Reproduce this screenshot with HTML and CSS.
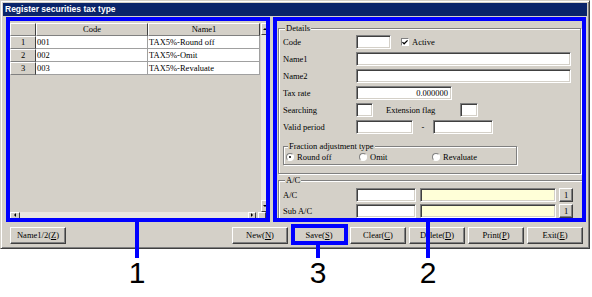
FILE: index.html
```html
<!DOCTYPE html>
<html>
<head>
<meta charset="utf-8">
<link rel="stylesheet" href="styles.css">
</head>
<body>
<div class="page">
  <div class="window">
    <div class="titlebar">Register securities tax type</div>
    <div class="panels">
      <div class="box left">
        <div class="grid">
          <div class="grid-main">
            <div class="table">
              <div class="row">
                <div class="hcell rh"></div>
                <div class="hcell c1">Code</div>
                <div class="hcell c2">Name1</div>
              </div>
              <div class="row">
                <div class="hcell rh">1</div>
                <div class="dcell c1">001</div>
                <div class="dcell c2">TAX5%-Round off</div>
              </div>
              <div class="row">
                <div class="hcell rh">2</div>
                <div class="dcell c1">002</div>
                <div class="dcell c2">TAX5%-Omit</div>
              </div>
              <div class="row">
                <div class="hcell rh">3</div>
                <div class="dcell c1">003</div>
                <div class="dcell c2">TAX5%-Revaluate</div>
              </div>
            </div>
            <div class="vscroll">
              <div class="sbtn"><span class="tri up"></span></div>
              <div class="sbtn"><span class="tri down"></span></div>
            </div>
          </div>
          <div class="hscroll">
            <div class="sbtn hl"><span class="tri left-t"></span></div>
            <div class="track"></div>
            <div class="sbtn hr"><span class="tri right-t"></span></div>
            <div class="gapsq"></div>
            <div class="sbtn corner"></div>
          </div>
        </div>
      </div>
      <div class="box right">
        <fieldset class="group details">
          <legend>Details</legend>
          <div class="frow first">
            <span class="lbl">Code</span>
            <span class="inp w-code"></span>
            <span class="chk"><svg width="7" height="7" viewBox="0 0 7 7"><path d="M0.5 3 L2.5 5 L6.5 1" fill="none" stroke="#000" stroke-width="1.4"/></svg></span>
            <span class="chk-lbl">Active</span>
          </div>
          <div class="frow">
            <span class="lbl">Name1</span>
            <span class="inp w-name"></span>
          </div>
          <div class="frow">
            <span class="lbl">Name2</span>
            <span class="inp w-name"></span>
          </div>
          <div class="frow">
            <span class="lbl">Tax rate</span>
            <span class="inp w-tax num-r">0.000000</span>
          </div>
          <div class="frow">
            <span class="lbl">Searching</span>
            <span class="inp w-s1"></span>
            <span class="lbl2">Extension flag</span>
            <span class="inp w-s2"></span>
          </div>
          <div class="frow">
            <span class="lbl">Valid period</span>
            <span class="inp w-v1"></span>
            <span class="dash">-</span>
            <span class="inp w-v2"></span>
          </div>
          <fieldset class="group frac">
            <legend>Fraction adjustment type</legend>
            <div class="radios">
              <span class="ritem"><span class="radio on"></span>Round off</span>
              <span class="ritem"><span class="radio"></span>Omit</span>
              <span class="ritem"><span class="radio"></span>Revaluate</span>
            </div>
          </fieldset>
        </fieldset>
        <fieldset class="group ac">
          <legend>A/C</legend>
          <div class="frow">
            <span class="lbl">A/C</span>
            <span class="inp w-ac"></span>
            <span class="inp yellow"></span>
            <span class="pbtn">1</span>
          </div>
          <div class="frow second">
            <span class="lbl">Sub A/C</span>
            <span class="inp w-ac"></span>
            <span class="inp yellow"></span>
            <span class="pbtn">1</span>
          </div>
        </fieldset>
      </div>
    </div>
    <div class="buttons">
      <span class="btn">Name1/2(<u>Z</u>)</span>
      <div class="btn-group">
        <span class="btn">New(<u>N</u>)</span>
        <span class="btn">Save(<u>S</u>)</span>
        <span class="btn">Clear(<u>C</u>)</span>
        <span class="btn">Delete(<u>D</u>)</span>
        <span class="btn">Print(<u>P</u>)</span>
        <span class="btn">Exit(<u>E</u>)</span>
      </div>
    </div>
  </div>
  <div class="save-box"></div>
  <div class="vline l1"></div>
  <div class="vline l3"></div>
  <div class="vline l2"></div>
  <div class="callout n1">1</div>
  <div class="callout n3">3</div>
  <div class="callout n2">2</div>
</div>
</body>
</html>
```
FILE: styles.css
```css
* { box-sizing: border-box; }
body {
  margin: 0;
  background: #fff;
  font-family: "Liberation Serif", serif;
  font-size: 8.5px;
  color: #000;
}
.page { position: relative; width: 592px; height: 297px; }
.window {
  width: 590px;
  height: 249px;
  background: #d4d0c8;
  border: 1px solid;
  border-color: #d4d0c8 #404040 #404040 #d4d0c8;
  box-shadow: inset 1px 1px #fff, inset -1px -1px #808080;
  padding: 2px 2px 0 2px;
  display: flex;
  flex-direction: column;
}
.titlebar {
  height: 13px;
  background: #0a246a;
  color: #fff;
  font: bold 8.5px/13px "Liberation Sans", sans-serif;
  padding-left: 2px;
}
.panels {
  display: flex;
  gap: 3px;
  margin: 1px 0 0 3px;
}
.box {
  border: 4px solid #0000ff;
  height: 205px;
  overflow: hidden;
}
.left { width: 264px; }
.right { width: 313px; padding: 3px 0 0 1px; }

/* grid */
.grid { display: flex; flex-direction: column; height: 100%; }
.grid-main { flex: 1; display: flex; padding-top: 2px; }
.table { width: 250px; }
.row { display: flex; height: 13px; }
.hcell {
  background: #d4d0c8;
  border-top: 1px solid #fff;
  border-left: 1px solid #fff;
  border-right: 1px solid #404040;
  border-bottom: 1px solid #808080;
  text-align: center;
  line-height: 11px;
}
.dcell {
  background: #fff;
  border-right: 1px solid #a0a0a0;
  border-bottom: 1px solid #a0a0a0;
  line-height: 12px;
  padding-left: 1px;
}
.rh { width: 26px; }
.c1 { width: 112px; }
.c2 { width: 112px; }
.vscroll {
  width: 6px;
  margin-left: 1px;
  background: #e8e6e1;
  display: flex;
  flex-direction: column;
  justify-content: space-between;
}
.sbtn {
  background: #d4d0c8;
  border-top: 1px solid #fff;
  border-left: 1px solid #fff;
  border-right: 1px solid #404040;
  border-bottom: 1px solid #404040;
  display: flex;
  align-items: center;
  justify-content: center;
}
.vscroll .sbtn { height: 12px; width: 8px; }
.hscroll { height: 6px; display: flex; }
.hscroll .sbtn { height: 8px; }
.hl { width: 10px; }
.track { width: 230px; background: #e8e6e1; }
.hr { width: 8px; }
.gapsq { width: 2px; }
.corner { width: 8px; }
.tri { width: 0; height: 0; border: 2px solid transparent; }
.tri.up { border-bottom-color: #000; border-top-width: 0; }
.tri.down { border-top-color: #000; border-bottom-width: 0; }
.tri.left-t { border-right-color: #000; border-left-width: 0; margin-top: -2px; }
.tri.right-t { border-left-color: #000; border-right-width: 0; margin-top: -2px; }

/* group boxes */
.group {
  margin: 0;
  border: 1px solid #808080;
  box-shadow: 1px 1px 0 #fff, inset 1px 1px 0 #fff;
  min-width: 0;
}
.group legend {
  padding: 0 1px;
  margin-left: 2px;
  line-height: 9px;
  background: #d4d0c8;
}
.details { width: 303px; padding: 0 2px 8px 4px; }
.frow { display: flex; align-items: center; height: 14px; margin-top: 3px; }
.frow.first { margin-top: 2px; }
.lbl { width: 73px; }
.inp {
  height: 14px;
  background: #fff;
  border: 1px solid;
  border-color: #808080 #fff #fff #808080;
  box-shadow: inset 1px 1px #404040, inset -1px -1px #d4d0c8;
  line-height: 12px;
}
.w-code { width: 35px; }
.w-name { width: 215px; }
.w-tax { width: 96px; }
.num-r { text-align: right; padding-right: 3px; }
.w-s1 { width: 17px; }
.w-s2 { width: 18px; }
.w-v1 { width: 57px; }
.w-v2 { width: 60px; }
.lbl2 { width: 74px; margin-left: 13px; }
.dash { width: 20px; text-align: center; }
.chk {
  width: 8px; height: 8px; margin-left: 10px;
  background: #fff;
  border: 1px solid; border-color: #808080 #fff #fff #808080;
  display: flex; align-items: center; justify-content: center;
}
.chk svg { display: block; }
.chk-lbl { margin-left: 3px; }
.frac { width: 234px; margin-top: 8px; padding: 0 2px 3px 2px; }
.radios { display: flex; height: 9px; align-items: center; margin-top: 1px; }
.ritem { width: 73px; display: flex; align-items: center; }
.radio {
  width: 8px; height: 8px; border-radius: 50%;
  background: #fff;
  border: 1px solid; border-color: #808080 #fff #fff #808080;
  margin-right: 3px;
  position: relative;
}
.radio.on::after {
  content: ""; position: absolute; left: 2px; top: 2px;
  width: 2px; height: 2px; background: #000; border-radius: 50%;
}
.ac { width: 305px; height: 50px; margin-top: 2px; padding: 0 2px 0 4px; }
.ac .frow { margin-top: 3px; }
.ac .frow.second { margin-top: 2px; }
.w-ac { width: 60px; }
.yellow { width: 136px; margin-left: 4px; background: #ffffd8; }
.pbtn {
  width: 14px; height: 14px; margin-left: 3px;
  background: #d4d0c8;
  border: 1px solid; border-color: #fff #404040 #404040 #fff;
  box-shadow: inset -1px -1px #808080;
  text-align: center; line-height: 12px;
}

/* bottom buttons */
.buttons {
  display: flex;
  justify-content: space-between;
  margin-top: 5px;
  padding: 0 4px 0 7px;
}
.btn-group { display: flex; gap: 3px; }
.btn {
  width: 56px; height: 17px;
  background: #d4d0c8;
  border: 1px solid; border-color: #fff #404040 #404040 #fff;
  box-shadow: inset -1px -1px #808080;
  text-align: center; line-height: 15px;
}

/* annotations */
.save-box {
  position: absolute; left: 291px; top: 224px;
  width: 57px; height: 21px;
  border: 4px solid #0000ff;
}
.vline { position: absolute; width: 4px; background: #0000ff; }
.l1 { left: 135px; top: 222px; height: 36px; }
.l3 { left: 316px; top: 244px; height: 14px; }
.l2 { left: 426px; top: 222px; height: 36px; }
.callout {
  position: absolute; top: 258px;
  font: 30px/30px "Liberation Sans", sans-serif;
  width: 30px; text-align: center;
}
.n1 { left: 122px; }
.n3 { left: 303px; }
.n2 { left: 413px; }
```
